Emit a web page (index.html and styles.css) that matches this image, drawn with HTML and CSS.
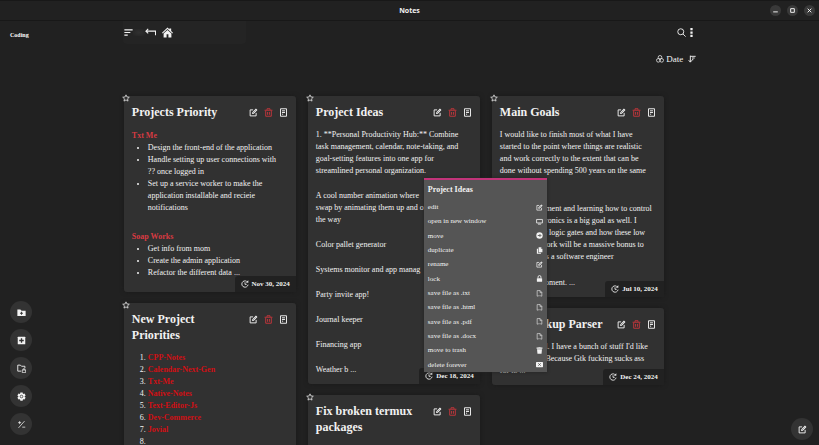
FILE: index.html
```html
<!DOCTYPE html>
<html lang="en">
<head>
<meta charset="utf-8">
<title>Notes</title>
<link rel="stylesheet" href="styles.css">
</head>
<body>
<svg class="sprite" aria-hidden="true">
  <symbol id="star" viewBox="0 0 24 24"><path d="M12 2.500l2.900 6.400 7 .8-5.200 4.700 1.400 6.900L12 17.800l-6.100 3.500 1.400-6.900L2.100 9.700l7-.8z" fill="none" stroke="currentColor" stroke-width="2.200" stroke-linejoin="round"/></symbol>
  <symbol id="edit" viewBox="0 0 24 24"><path d="M11 5H3v16h16v-8" fill="none" stroke="currentColor" stroke-width="2.500"/><path d="M8 16l1-5 9.500-9.500 4 4L13 15z" fill="currentColor"/><path d="M10.500 13.500L18 6" stroke="#313131" stroke-width="1.200"/></symbol>
  <symbol id="trash" viewBox="0 0 24 24"><path d="M1.500 6h21M8 5V2h8v3M4.500 7v15h15V7M9.500 10.500v7.500M14.500 10.500v7.500" fill="none" stroke="currentColor" stroke-width="2.400"/></symbol>
  <symbol id="note" viewBox="0 0 24 24"><path d="M4 2h16v20H4zM8 7.500h8M8 12h8M8 16.500h3" fill="none" stroke="currentColor" stroke-width="2.500" stroke-linejoin="round"/></symbol>
  <symbol id="clock" viewBox="0 0 24 24"><path d="M17 4a9.500 9.500 0 1 0 4.300 10M12 7v6h5" fill="none" stroke="currentColor" stroke-width="2.600"/><path d="M14.500 7.500L22 8.500V1z" fill="currentColor"/></symbol>
  <symbol id="open" viewBox="0 0 24 24"><path d="M2 5h20v12H2zM7 21h10" fill="none" stroke="currentColor" stroke-width="2.800" stroke-linejoin="round"/></symbol>
  <symbol id="move" viewBox="0 0 24 24"><circle cx="12" cy="12" r="11" fill="currentColor"/><path d="M6 12h10M12 7l5 5-5 5" fill="none" stroke="#555" stroke-width="3"/></symbol>
  <symbol id="copy" viewBox="0 0 24 24"><path d="M9 1h8v6h5v11H9z" fill="currentColor"/><path d="M18 1l4 4h-4zM3 6h4v14h10v3H3z" fill="currentColor"/></symbol>
  <symbol id="lock" viewBox="0 0 24 24"><rect x="3" y="11" width="18" height="12" rx="2" fill="currentColor"/><path d="M7 11V7a5 5 0 0 1 10 0v4" fill="none" stroke="currentColor" stroke-width="3"/></symbol>
  <symbol id="file" viewBox="0 0 24 24"><path d="M8 21H4V2h10l6 6v13h-4M14 2v7h6M9 18l3 3 3-3" fill="none" stroke="currentColor" stroke-width="2"/></symbol>
  <symbol id="bin" viewBox="0 0 24 24"><path d="M2 2h6l1-1h6l1 1h6v4H2zM3.500 7.500h17L19 23H5z" fill="currentColor"/></symbol>
  <symbol id="delete" viewBox="0 0 24 24"><rect x="0" y="3" width="24" height="18" rx="2" fill="currentColor"/><path d="M8 8l8 8M16 8l-8 8" stroke="#555" stroke-width="3"/></symbol>
</svg>

<header class="titlebar">
  <h1>Notes</h1>
  <div class="window-buttons">
    <button aria-label="Minimize"><svg viewBox="0 0 12 12"><path d="M3.500 7.500h5"/></svg></button>
    <button aria-label="Maximize"><svg viewBox="0 0 12 12"><path d="M4 4h4v4H4z"/></svg></button>
    <button aria-label="Close"><svg viewBox="0 0 12 12"><path d="M4 4l4 4M8 4l-4 4"/></svg></button>
  </div>
</header>

<div class="app">
  <aside class="sidebar">
    <a class="folder" href="#">Coding</a>
    <nav class="tools">
      <button aria-label="New folder"><svg viewBox="0 0 24 24"><path d="M1 4h8l3 3h11v14H1z" fill="currentColor"/><path d="M12 10v8M8 14h8" stroke="#333" stroke-width="2.500"/></svg></button>
      <button aria-label="New note"><svg viewBox="0 0 24 24"><rect x="2" y="2" width="20" height="20" rx="1" fill="currentColor"/><path d="M12 6v12M6 12h12" stroke="#333" stroke-width="3.500"/></svg></button>
      <button aria-label="Locked folder"><svg viewBox="0 0 24 24"><path d="M11 19H2V3h7l3 3h9v5" fill="none" stroke="currentColor" stroke-width="2.400"/><path d="M16 16v-3h5v3M14 16h9v7h-9z" fill="none" stroke="currentColor" stroke-width="2"/></svg></button>
      <button aria-label="Settings"><svg viewBox="0 0 24 24"><path d="M9 1h6l1 4 4-1 3 5-3 3 3 3-3 5-4-1-1 4H9l-1-4-4 1-3-5 3-3-3-3 3-5 4 1z" fill="currentColor"/><circle cx="12" cy="12" r="3.500" fill="none" stroke="#333" stroke-width="2"/></svg></button>
      <button aria-label="Calculator"><svg viewBox="0 0 24 24"><path d="M20 3L4 21M7 3v8M3 7h8M14 19h8" fill="none" stroke="currentColor" stroke-width="2"/></svg></button>
    </nav>
  </aside>

  <main class="content">
    <div class="toolbar">
      <div class="crumbs">
        <button aria-label="Folders"><svg viewBox="0 0 24 24"><path d="M1 5h22M1 12h16M1 19h9" fill="none" stroke="currentColor" stroke-width="3"/></svg></button>
        <span class="smudge"></span>
        <button class="back" aria-label="Back"><svg viewBox="0 0 24 24"><path d="M23 18V9H2M7 4L2 9l5 5" fill="none" stroke="currentColor" stroke-width="2.400"/></svg></button>
        <button class="home" aria-label="Home"><svg viewBox="0 0 24 24"><path d="M12 1l4 4V3h4v5.500l4 4-1.500 1.500L12 4.500 1.500 14 0 12.500z" fill="currentColor"/><path d="M12 6.500l8.500 7.500v9H14v-7h-4v7H3.500v-9z" fill="currentColor"/></svg></button>
      </div>
      <div class="actions">
        <button aria-label="Search"><svg viewBox="0 0 24 24"><circle cx="10" cy="10" r="8" fill="none" stroke="currentColor" stroke-width="2.400"/><path d="M16 16l7 7" stroke="currentColor" stroke-width="2.400"/></svg></button>
        <button aria-label="More"><svg viewBox="0 0 24 24"><path d="M9 0h6v6H9zM9 9h6v6H9zM9 18h6v6H9z" fill="currentColor"/></svg></button>
      </div>
    </div>
    <div class="sort">
      <button><svg viewBox="0 0 24 24"><g fill="none" stroke="currentColor" stroke-width="2.200"><circle cx="12" cy="7" r="5.500"/><circle cx="7" cy="16" r="5.500"/><circle cx="17" cy="16" r="5.500"/></g></svg>Date</button>
      <button aria-label="Sort direction"><svg viewBox="0 0 24 24"><path d="M7 2v19M2 15.500l5 6 5-6M7 4h16M12 9h8M12 14h4" fill="none" stroke="currentColor" stroke-width="2.800"/></svg></button>
    </div>

    <div class="board">
      <div class="column">
        <article class="card">
          <button class="star" aria-label="Favorite"><svg><use href="#star"/></svg></button>
          <header><h2>Projects Priority</h2><div class="card-tools"><button aria-label="Edit"><svg><use href="#edit"/></svg></button><button class="danger" aria-label="Delete"><svg><use href="#trash"/></svg></button><button aria-label="Details"><svg><use href="#note"/></svg></button></div></header>
          <div class="text">
            <h3>Txt Me</h3>
            <ul><li>Design the front-end of the application</li><li>Handle setting up user connections with<br>?? once logged in</li><li>Set up a service worker to make the<br>application installable and recieie<br>notifications</li></ul>
            <h3>Soap Works</h3>
            <ul><li>Get info from mom</li><li>Create the admin application</li><li>Refactor the different data ...</li></ul>
          </div>
          <footer><svg><use href="#clock"/></svg>Nov 30, 2024</footer>
        </article>
        <article class="card">
          <button class="star" aria-label="Favorite"><svg><use href="#star"/></svg></button>
          <header><h2>New Project Priorities</h2><div class="card-tools"><button aria-label="Edit"><svg><use href="#edit"/></svg></button><button class="danger" aria-label="Delete"><svg><use href="#trash"/></svg></button><button aria-label="Details"><svg><use href="#note"/></svg></button></div></header>
          <div class="text">
            <ol><li><b>CPP-Notes</b></li><li><b>Calendar-Next-Gen</b></li><li><b>Txt-Me</b></li><li><b>Native-Notes</b></li><li><b>Text-Editor-Js</b></li><li><b>Dev-Commerce</b></li><li><b>Jovial</b></li><li></li></ol>
          </div>
        </article>
      </div>

      <div class="column">
        <article class="card">
          <button class="star" aria-label="Favorite"><svg><use href="#star"/></svg></button>
          <header><h2>Project Ideas</h2><div class="card-tools"><button aria-label="Edit"><svg><use href="#edit"/></svg></button><button class="danger" aria-label="Delete"><svg><use href="#trash"/></svg></button><button aria-label="Details"><svg><use href="#note"/></svg></button></div></header>
          <div class="text">
            <p>1. **Personal Productivity Hub:** Combine<br>task management, calendar, note-taking, and<br>goal-setting features into one app for<br>streamlined personal organization.</p>
            <p>A cool number animation where<br>swap by animating them up and o<br>the way</p>
            <p>Color pallet generator</p>
            <p>Systems monitor and app manag</p>
            <p>Party invite app!</p>
            <p>Journal keeper</p>
            <p>Financing app</p>
            <p>Weather b ...</p>
          </div>
          <footer><svg><use href="#clock"/></svg>Dec 18, 2024</footer>
          <div class="menu" role="menu">
            <h3>Project Ideas</h3>
            <button>edit<svg><use href="#edit"/></svg></button>
            <button>open in new window<svg><use href="#open"/></svg></button>
            <button>move<svg><use href="#move"/></svg></button>
            <button>duplicate<svg><use href="#copy"/></svg></button>
            <button>rename<svg><use href="#edit"/></svg></button>
            <button>lock<svg><use href="#lock"/></svg></button>
            <button>save file as .txt<svg><use href="#file"/></svg></button>
            <button>save file as .html<svg><use href="#file"/></svg></button>
            <button>save file as .pdf<svg><use href="#file"/></svg></button>
            <button>save file as .docx<svg><use href="#file"/></svg></button>
            <button>move to trash<svg><use href="#bin"/></svg></button>
            <button>delete forever<svg><use href="#delete"/></svg></button>
          </div>
        </article>
        <article class="card">
          <button class="star" aria-label="Favorite"><svg><use href="#star"/></svg></button>
          <header><h2>Fix broken termux packages</h2><div class="card-tools"><button aria-label="Edit"><svg><use href="#edit"/></svg></button><button class="danger" aria-label="Delete"><svg><use href="#trash"/></svg></button><button aria-label="Details"><svg><use href="#note"/></svg></button></div></header>
          <div class="text"><p>A bit more work for packages</p></div>
        </article>
      </div>

      <div class="column">
        <article class="card">
          <button class="star" aria-label="Favorite"><svg><use href="#star"/></svg></button>
          <header><h2>Main Goals</h2><div class="card-tools"><button aria-label="Edit"><svg><use href="#edit"/></svg></button><button class="danger" aria-label="Delete"><svg><use href="#trash"/></svg></button><button aria-label="Details"><svg><use href="#note"/></svg></button></div></header>
          <div class="text relaxed">
            <p>I would like to finish most of what I have<br>started to the point where things are realistic<br>and work correctly to the extent that can be<br>done without spending 500 years on the same<br>project.</p>
            <p>Game environment and learning how to control<br>the basic electronics is a big goal as well. I<br>and know how logic gates and how these low<br>and level network will be a massive bonus to<br>for my skills as a software engineer</p>
            <p>again at the moment. ...</p>
          </div>
          <footer><svg><use href="#clock"/></svg>Jul 10, 2024</footer>
        </article>
        <article class="card">
          <header><h2>Gtk Markup Parser</h2><div class="card-tools"><button aria-label="Edit"><svg><use href="#edit"/></svg></button><button class="danger" aria-label="Delete"><svg><use href="#trash"/></svg></button><button aria-label="Details"><svg><use href="#note"/></svg></button></div></header>
          <div class="text"><p>I need one tool. I have a bunch of stuff I'd like<br>to parse it all. Because Gtk fucking sucks ass<br>for it. ...</p></div>
          <footer><svg><use href="#clock"/></svg>Dec 24, 2024</footer>
        </article>
      </div>
    </div>
  </main>
  <button class="compose" aria-label="Compose"><svg><use href="#edit"/></svg></button>
</div>
</body>
</html>
```
FILE: styles.css
```css
* { box-sizing: border-box; margin: 0; padding: 0; }
body {
  height: 100vh;
  overflow: hidden;
  display: flex;
  flex-direction: column;
  background: #212121;
  color: #f2f2f2;
  font: 8px/12px "Liberation Serif", serif;
}
button { border: 0; background: none; color: inherit; font: inherit; }
svg { display: block; width: 9px; height: 9px; flex: none; }
.sprite { position: absolute; width: 0; height: 0; }

.titlebar {
  flex: none;
  display: grid;
  grid-template-columns: 1fr auto 1fr;
  align-items: center;
  height: 21px;
  border-top: 1px solid #181818;
  border-bottom: 1px solid #181818;
}
.titlebar h1 { grid-column: 2; font: bold 7px/12px "Open Sans", sans-serif; }
.window-buttons { display: flex; justify-content: flex-end; gap: 6px; padding-right: 4px; }
.window-buttons button { width: 11px; height: 11px; border-radius: 50%; background: #393939; }
.window-buttons svg { width: 11px; height: 11px; fill: none; stroke: #fff; }

.app { flex: 1; min-height: 0; display: flex; position: relative; }
.sidebar {
  width: 15%;
  display: flex;
  flex-direction: column;
  justify-content: space-between;
  align-items: flex-start;
  padding: 8px 10px 10px;
}
.folder { color: #fff; font-size: 6px; font-weight: bold; text-decoration: none; }
.tools { display: flex; flex-direction: column; gap: 6px; }
.tools button, .compose {
  display: grid;
  place-items: center;
  width: 22px;
  height: 22px;
  border-radius: 50%;
  background: #333;
}
.compose { position: absolute; right: 6px; bottom: 5px; }

.content { width: 70%; min-width: 0; }
.toolbar { display: flex; justify-content: space-between; align-items: flex-start; }
.crumbs {
  display: flex;
  align-items: center;
  width: 123px;
  height: 23px;
  padding-left: 1px;
  background: #242424;
  border-radius: 0 0 4px 4px;
}
.smudge { width: 12px; height: 7px; background: radial-gradient(#303030, #242424); }
.crumbs .home { margin-left: 6px; }
.crumbs .home svg, .crumbs .back svg { width: 11px; height: 11px; }
.actions { display: flex; gap: 1px; padding: 7px 0 0; }
.sort { display: flex; justify-content: flex-end; gap: 5px; padding-top: 9px; }
.sort button { display: flex; align-items: center; gap: 2px; font-size: 9px; }
.sort svg { width: 8px; height: 8px; }

.board { display: flex; gap: 12px; padding: 31px 0 0 1px; }
.column { width: 172px; display: flex; flex-direction: column; gap: 11px; }
.card {
  position: relative;
  background: #313131;
  border-radius: 3px;
  box-shadow: 0 0 4px #1a1a1a;
}
.star { position: absolute; left: -2px; top: -2px; }
.star svg { width: 8px; height: 8px; }
.card header {
  display: flex;
  justify-content: space-between;
  align-items: flex-start;
  gap: 8px;
  padding: 8px 8px 9px;
}
h2 { font-size: 12px; line-height: 16px; }
.card-tools { display: flex; gap: 6px; padding-top: 4px; }
.danger { color: #c8363c; }
.text { padding: 0 8px 8px; white-space: nowrap; }
.text p + p { margin-top: 13px; }
.text.relaxed p + p { margin-top: 14px; }
.text h3 { font-size: 8px; line-height: 13px; color: #d83a42; }
.text ul, .text ol { padding-left: 16px; }
.text ul + h3 { margin-top: 16px; }
.text ul:last-child { margin-bottom: 5px; }
.text b { color: #d00f14; }
.card footer {
  position: absolute;
  right: 0;
  bottom: 0;
  display: flex;
  align-items: center;
  gap: 3px;
  height: 16px;
  padding: 0 6px;
  background: #212121;
  border-radius: 3px 0 0 0;
  font-size: 7px;
  font-weight: bold;
}
.card footer svg { width: 8px; height: 8px; }

.menu {
  position: absolute;
  z-index: 1;
  left: 116px;
  top: 82px;
  width: 123px;
  height: 194px;
  display: grid;
  grid-template-rows: 20px repeat(12, 1fr);
  background: #555;
  border-top: 2px solid #c2347a;
  box-shadow: 0 0 3px #222;
}
.column:has(.menu) { position: relative; z-index: 1; }
.menu h3 { padding: 4px; font-size: 8px; }
.menu button {
  display: flex;
  justify-content: space-between;
  align-items: center;
  padding: 0 4px;
  font-size: 7px;
}
.menu svg { width: 7px; height: 7px; }
```
